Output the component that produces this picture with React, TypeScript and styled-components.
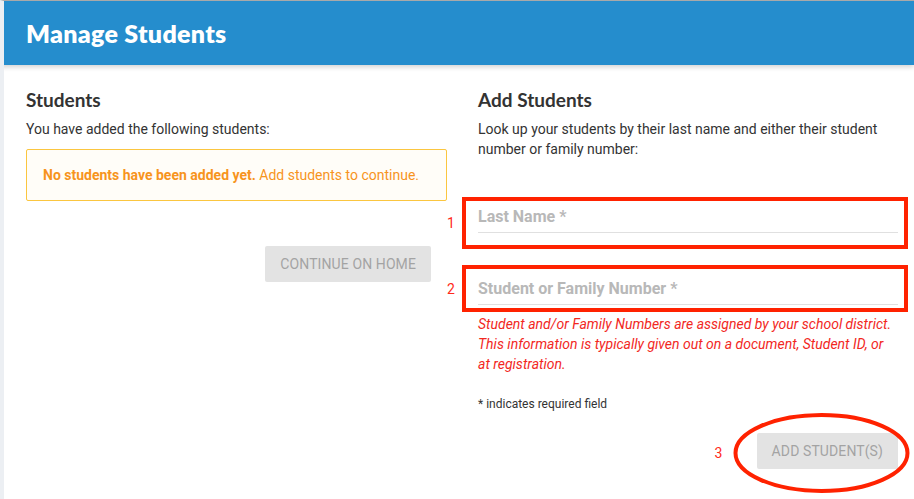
import React from "react";
import styled, { createGlobalStyle } from "styled-components";

const Global = createGlobalStyle`
  html, body { margin: 0; padding: 0; background: #fff; }
  body { font-family: Roboto, "Liberation Sans", sans-serif; color: #333; }
  * { box-sizing: border-box; }
`;

const Page = styled.div`
  width: 914px;
  height: 499px;
  overflow: hidden;
  border-top: 1px solid #a9a9a9;
  border-left: 4px solid #eceff3;
  background: #fff;
  position: relative;
`;

const Header = styled.header`
  height: 64px;
  margin-left: -4px;
  background: #258dcd;
  display: flex;
  align-items: center;
  padding-left: 26px;
  box-shadow: 0 2px 5px rgba(0, 0, 0, 0.18);
  position: relative;
  z-index: 1;
`;

const Title = styled.h1`
  margin: 0;
  color: #fff;
  font-family: Lato, "Open Sans", sans-serif;
  font-weight: 800;
  font-size: 25px;
  letter-spacing: 0.3px;
`;

const Main = styled.main`
  display: grid;
  grid-template-columns: 421px 420px;
  column-gap: 31px;
  padding: 24px 0 0 22px;
`;

const Column = styled.section`
  display: flex;
  flex-direction: column;
`;

const Heading = styled.h2`
  margin: 0;
  font-family: Lato, "Open Sans", sans-serif;
  font-weight: 700;
  font-size: 19px;
  line-height: 22px;
  color: #333;
`;

const Para = styled.p`
  margin: 8px 0 0;
  font-size: 14px;
  line-height: 20px;
  color: #333;
`;

const Alert = styled.div`
  margin-top: 10px;
  height: 52px;
  border: 1px solid #fbc640;
  border-radius: 2px;
  background: #fffdf8;
  display: flex;
  align-items: center;
  padding-left: 16px;
  font-size: 14px;
  color: #f7941d;
  b { font-weight: 700; }
`;

const ButtonRow = styled.div<{ $top: number; $right?: number }>`
  display: flex;
  justify-content: flex-end;
  margin-top: ${(p) => p.$top}px;
  padding-right: ${(p) => p.$right ?? 0}px;
  position: relative;
`;

const ButtonAnchor = styled.div`
  position: relative;
`;

const FlatButton = styled.button`
  height: 36px;
  padding: 0 15px;
  border: none;
  border-radius: 2px;
  background: #e3e3e3;
  color: #a3a3a3;
  font-family: Roboto, "Liberation Sans", sans-serif;
  font-size: 14px;
  letter-spacing: 0.1px;
  text-transform: uppercase;
`;

const Field = styled.div<{ $top: number }>`
  position: relative;
  margin-top: ${(p) => p.$top}px;
  height: 33px;
  padding-top: 7px;
  border-bottom: 1px solid #e0e0e0;
`;

const FieldLabel = styled.label`
  display: block;
  font-size: 16px;
  line-height: 20px;
  font-weight: 700;
  color: #b8b8b8;
`;

const AnnotBox = styled.div<{ $t: number; $b: number }>`
  position: absolute;
  left: -16px;
  right: -10px;
  top: ${(p) => p.$t}px;
  bottom: ${(p) => p.$b}px;
  border: 4px solid #ff2200;
  pointer-events: none;
`;

const AnnotNum = styled.span<{ $y: number; $x: number }>`
  position: absolute;
  left: ${(p) => p.$x}px;
  top: ${(p) => p.$y}px;
  color: #ff2a1a;
  font-size: 14px;
  line-height: 16px;
  font-family: Roboto, "Liberation Sans", sans-serif;
`;

const Help = styled.p`
  margin: 9px 0 0;
  font-size: 14px;
  line-height: 20px;
  font-style: italic;
  color: #f2281e;
`;

const Required = styled.p`
  margin: 22px 0 0;
  font-size: 12px;
  line-height: 16px;
  color: #333;
`;

const Ellipse = styled.svg`
  position: absolute;
  left: -24px;
  top: -20px;
  overflow: visible;
  pointer-events: none;
`;

export default function App() {
  return (
    <>
      <Global />
      <Page>
        <Header>
          <Title>Manage Students</Title>
        </Header>
        <Main>
          <Column>
            <Heading>Students</Heading>
            <Para>You have added the following students:</Para>
            <Alert>
              <span>
                <b>No students have been added yet.</b> Add students to continue.
              </span>
            </Alert>
            <ButtonRow $top={45} $right={16}>
              <FlatButton>Continue on Home</FlatButton>
            </ButtonRow>
          </Column>
          <Column>
            <Heading>Add Students</Heading>
            <Para>
              Look up your students by their last name and either their student
              number or family number:
            </Para>
            <Field $top={41}>
              <FieldLabel>Last Name *</FieldLabel>
              <AnnotBox $t={-3} $b={-17} />
              <AnnotNum $x={-31} $y={15}>1</AnnotNum>
            </Field>
            <Field $top={39}>
              <FieldLabel>Student or Family Number *</FieldLabel>
              <AnnotBox $t={-7} $b={-8} />
              <AnnotNum $x={-31} $y={9}>2</AnnotNum>
            </Field>
            <Help>
              Student and/or Family Numbers are assigned by your school district.
              This information is typically given out on a document, Student ID,
              or at registration.
            </Help>
            <Required>* indicates required field</Required>
            <ButtonRow $top={21}>
              <ButtonAnchor>
                <AnnotNum $x={-42} $y={12}>3</AnnotNum>
                <Ellipse width="177" height="80" viewBox="0 0 177 80">
                  <ellipse
                    cx="88.5"
                    cy="40"
                    rx="86"
                    ry="38"
                    fill="none"
                    stroke="#ff2200"
                    strokeWidth="4"
                  />
                </Ellipse>
                <FlatButton>Add Student(s)</FlatButton>
              </ButtonAnchor>
            </ButtonRow>
          </Column>
        </Main>
      </Page>
    </>
  );
}
